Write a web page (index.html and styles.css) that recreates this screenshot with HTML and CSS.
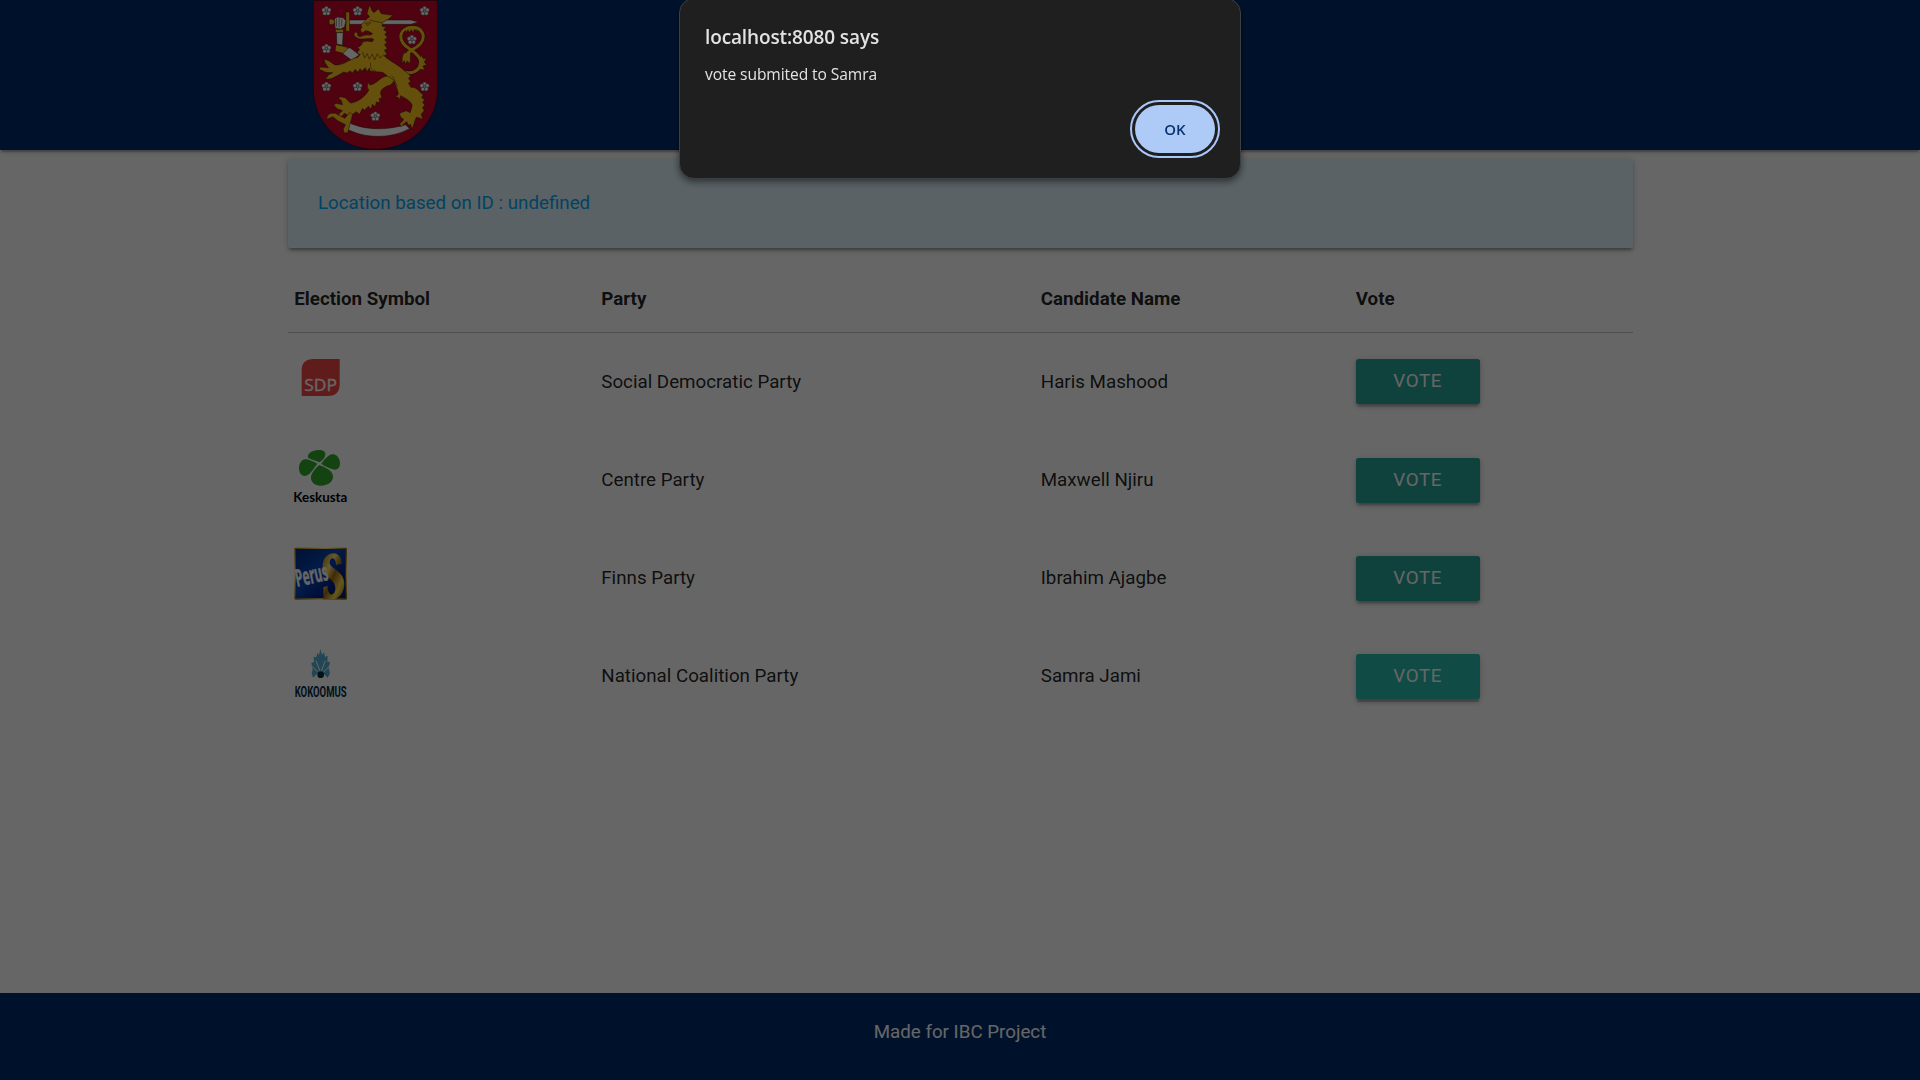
FILE: index.html
```html
<!DOCTYPE html>
<html lang="en">
<head>
<meta charset="utf-8">
<title>Vote</title>
<link rel="stylesheet" href="styles.css">
</head>
<body>
<header class="nav">
  <svg class="crest" viewBox="70 0 373 450" preserveAspectRatio="none">
    <defs>
      <g id="rose">
        <g fill="#fff" stroke="#555" stroke-width="1.5">
          <circle cx="0" cy="-8" r="6"/><circle cx="8" cy="-3" r="6"/><circle cx="5" cy="7" r="6"/><circle cx="-5" cy="7" r="6"/><circle cx="-8" cy="-3" r="6"/>
        </g>
        <circle r="4" fill="#ddd" stroke="#444" stroke-width="1.5"/>
      </g>
      <path id="tail" d="M342 216C366 224 384 212 391 196C397 176 378 160 360 148C342 137 331 125 332 108C334 90 350 82 367 82C387 82 399 95 399 111C398 131 382 141 366 149C357 154 352 160 349 168"/>
    </defs>
    <path d="M71 1H442V265C442 366 363 448 256 448S71 366 71 265Z" fill="#c8062a" stroke="#3a0510" stroke-width="2"/>
    <use href="#rose" x="110" y="33"/><use href="#rose" x="203" y="33"/><use href="#rose" x="403" y="33"/>
    <use href="#rose" x="365" y="119"/><use href="#rose" x="110" y="146"/><use href="#rose" x="110" y="260"/>
    <use href="#rose" x="203" y="260"/><use href="#rose" x="403" y="260"/><use href="#rose" x="256" y="349"/>
    <g stroke="#33200a" stroke-width="1.5" stroke-linejoin="round">
      <path d="M176 60H362L385 66L362 73H176Z" fill="#fff"/>
      <path d="M168 362C215 392 290 392 346 374L358 386C300 418 220 416 166 384Z" fill="#fff"/>
      <path d="M156 150L180 143L208 164L186 181L160 162Z" fill="#fff"/>
      <use href="#tail" fill="none" stroke-width="12"/>
      <g fill="#fdc51f">
        <path d="M344 84L348 98L353 89L358 98L363 89L369 98L373 88L381 95L378 82Z"/>
        <path d="M392 166L400 176L410 174L402 185L409 195L398 198L404 210L391 208L380 210Z"/>
        <path d="M343 158C335 166 335 180 337 190L342 182L346 192L351 183L360 191L361 158Z"/>
      </g>
      <use href="#tail" fill="none" stroke="#fdc51f" stroke-width="9"/>
      <g fill="#fdc51f">
        <path d="M118 60C122 54 128 58 134 61V70C128 74 122 77 118 70ZM168 36H179V94H168ZM156 60H168V71H156Z"/>
        <path d="M239 14L246 32L252 38L265 26L274 41L288 43L308 46L296 57L286 62L278 68L276 79L288 81L281 89L291 96L284 103L292 112L284 119L291 128L283 134L292 145L283 151L291 163L282 167C301 185 331 198 342 212L353 219L361 229L355 235L362 245L355 249L362 262C372 261 382 266 389 276L399 285L394 292L403 300L397 307L404 315L397 322L402 332L393 343L398 359L388 354L378 352L366 387L361 373L355 376L350 365L341 371L332 381L329 371L341 359L331 350L328 340L348 332L360 338L366 317C363 301 340 292 331 287L330 299L324 292L315 291L325 283C322 265 314 252 312 244L301 255C280 261 270 270 272 282L276 293L267 296L270 308L259 306L256 320L247 313L244 328L235 319L224 331L218 325L209 343L199 335L184 346L178 348L164 340L151 353L147 341L158 332L142 326L132 315L138 310L158 314L154 301L146 295L150 290L166 293L182 309C202 307 227 290 237 269L232 264L233 246L240 255C263 251 270 230 292 228L278 217L241 214L238 204L232 215L226 203L215 214L211 206L204 217L196 208L188 219L181 213L171 219L162 216L145 226L124 236L107 238L116 225L129 218L108 217L88 208L92 201L116 203L105 187L103 177L117 182L134 194C161 199 177 177 204 172L211 163L201 160L209 148L202 143L214 136L218 126L230 123L246 125L252 119C244 111 224 120 206 116C190 111 190 100 196 97C205 96 202 104 205 108C214 114 225 100 240 106L248 101L236 94L228 92L217 99L211 91L216 80L213 76L221 66L229 58L239 50L231 40Z"/>
        <path d="M137 88H161V98H137ZM138 134L158 138L176 143L160 160L136 154Z"/>
        <path d="M111 358C112 341 122 338 137 340L165 355L180 337L188 345L181 371L174 397L164 400L160 388L167 374L145 363L129 350Z"/>
      </g>
      <path d="M140 98H160L158 136L141 132ZM134 57L142 51L160 53L168 62L164 80L153 87L136 85Z" fill="#fff"/>
      <path d="M140 55V80M148 54V82M156 56V80M226 70L242 68L234 77ZM239 60C252 65 264 65 276 68M218 156L224 174L232 161L238 178L247 162L254 180L262 161L270 174L282 163M242 188C240 204 245 212 257 213M293 229C304 233 309 239 313 248M303 226C315 234 318 254 322 260" fill="none"/>
    </g>
  </svg>
</header>

<main class="container">
  <div class="card-panel">Location based on ID : undefined</div>
  <table class="ballot">
    <colgroup><col class="c-symbol"><col class="c-party"><col class="c-name"><col class="c-vote"></colgroup>
    <thead>
      <tr><th>Election Symbol</th><th>Party</th><th>Candidate Name</th><th>Vote</th></tr>
    </thead>
    <tbody>
      <tr>
        <td><svg class="symbol" viewBox="0 0 159 159">
          <g transform="translate(-1 21)">
            <path d="M24 114V38Q24 3 59 3H138V79Q138 114 103 114Z" fill="#f04444"/>
            <text x="32" y="99" class="sdp" textLength="98" lengthAdjust="spacingAndGlyphs">SDP</text>
          </g>
        </svg></td>
        <td>Social Democratic Party</td><td>Haris Mashood</td><td><button class="btn">VOTE</button></td>
      </tr>
      <tr>
        <td><svg class="symbol" viewBox="0 0 159 159">
          <g transform="translate(0 -6)">
            <g fill="#2ea829">
              <path d="M76 43L44 31C38 25 44 13 58 9C72 4 94 4 94 18C94 30 84 38 76 43Z"/>
              <path d="M82 47C90 36 103 20 115 19C130 18 139 34 138 48C137 63 126 68 114 63C102 59 91 54 82 47Z"/>
              <path d="M70 47C60 42 46 34 34 34C21 35 14 50 15 64C17 81 28 88 41 81C52 75 61 58 70 47Z"/>
              <path d="M76 51C65 60 52 75 51 87C50 103 62 113 80 113C104 113 118 100 117 85C116 66 92 58 76 51Z"/>
            </g>
            <text x="-2" y="161" class="keskusta" textLength="162" lengthAdjust="spacingAndGlyphs">Keskusta</text>
          </g>
        </svg></td>
        <td>Centre Party</td><td>Maxwell Njiru</td><td><button class="btn">VOTE</button></td>
      </tr>
      <tr>
        <td><svg class="symbol" viewBox="0 0 159 159">
          <defs>
            <linearGradient id="blue" x1="0" y1="0" x2="1" y2="1"><stop offset="0" stop-color="#002f80"/><stop offset=".45" stop-color="#0645b5"/><stop offset=".75" stop-color="#001b80"/><stop offset="1" stop-color="#002060"/></linearGradient>
            <linearGradient id="gold" x1="0" y1="0" x2="1" y2="1"><stop offset="0" stop-color="#a87a10"/><stop offset=".3" stop-color="#ffe278"/><stop offset=".5" stop-color="#9a6c10"/><stop offset=".75" stop-color="#ffd84e"/><stop offset="1" stop-color="#8a6008"/></linearGradient>
          </defs>
          <rect x="3" y="1" width="154" height="152" rx="2" fill="url(#blue)" stroke="url(#gold)" stroke-width="4"/>
          <path d="M143 47L126 51C126 28 110 24 107 42C104 62 151 67 151 107C151 139 130 156 106 154H88V118L101 113C101 147 123 147 124 121C125 93 85 87 86 51C87 10 143 -1 143 47Z" fill="url(#gold)"/>
          <text x="9" y="116" class="perus" textLength="99" lengthAdjust="spacingAndGlyphs" transform="rotate(-12 9 116)">Perus</text>
        </svg></td>
        <td>Finns Party</td><td>Ibrahim Ajagbe</td><td><button class="btn">VOTE</button></td>
      </tr>
      <tr>
        <td><svg class="symbol" viewBox="0 0 159 159">
          <g transform="translate(0 6)">
            <path d="M79 3L84 20L90 13L93 27L101 23L100 41L108 42L104 61L108 76L101 89L84 73L79 70L74 73L57 89L53 76L56 64L52 45L60 42L59 26L67 28L70 15L75 21Z" fill="#55b0d4"/>
            <path d="M51 52L76 77M109 52L84 77M66 38L78 70M94 38L82 70" stroke="#fff" stroke-width="3"/>
            <circle cx="80" cy="80" r="10" fill="#052d48"/>
            <text x="2" y="147" class="kokoomus" textLength="156" lengthAdjust="spacingAndGlyphs">KOKOOMUS</text>
          </g>
        </svg></td>
        <td>National Coalition Party</td><td>Samra Jami</td><td><button class="btn btn-hover">VOTE</button></td>
      </tr>
    </tbody>
  </table>
</main>

<footer class="footer">Made for IBC Project</footer>

<div class="overlay">
  <div class="dialog" role="alertdialog">
    <div class="dialog-title">localhost:8080 says</div>
    <div class="dialog-message">vote submited to Samra</div>
    <button class="dialog-ok">OK</button>
  </div>
</div>
</body>
</html>
```
FILE: styles.css
```css
* { box-sizing: border-box; }
html { font-size: 18.75px; }
body {
  margin: 0;
  height: 100vh;
  overflow: hidden;
  display: flex;
  flex-direction: column;
  background: #fff;
  color: rgba(0, 0, 0, .87);
  font-family: Roboto, sans-serif;
  line-height: 1.5;
}
.nav {
  flex: none;
  height: 150px;
  padding-left: 313px;
  background: #002f6c;
  box-shadow: 0 2px 3px rgba(0,0,0,.14), 0 4px 1px -2px rgba(0,0,0,.12), 0 1px 6px rgba(0,0,0,.2);
}
.crest { display: block; width: 125px; height: 150px; }
.container { flex: 1; width: 1345px; margin: 0 0 0 288px; }
.card-panel {
  margin: 9.4px 0 18.75px;
  padding: 30px;
  border-radius: 2.5px;
  background: #e1f5fe;
  color: #03a9f4;
  box-shadow: 0 2.5px 2.5px rgba(0,0,0,.14), 0 4px 1.25px -2.5px rgba(0,0,0,.12), 0 1.25px 6.25px rgba(0,0,0,.2);
}
.ballot { width: 100%; table-layout: fixed; border-collapse: collapse; }
.c-symbol { width: 307px; }
.c-party { width: 439.5px; }
.c-name { width: 315px; }
.ballot th, .ballot td { padding: 18.75px 6.25px; text-align: left; vertical-align: middle; }
.ballot td { height: 98px; padding-top: 0; padding-bottom: 0; }
.ballot tbody tr:first-child td { height: 99px; padding-bottom: 1px; }
.ballot th { font-weight: 700; }
.ballot thead { border-bottom: 1px solid rgba(0,0,0,.12); }
.symbol { display: block; width: 53px; height: 53px; margin-bottom: 8px; overflow: visible; }
.sdp { font: 47px "Open Sans", sans-serif; fill: #fff; stroke: #fff; stroke-width: 1; }
.keskusta { font: 700 37px Lato, sans-serif; fill: #000; }
.perus { font: 700 72px "Open Sans", sans-serif; fill: #fff; stroke: #fff; stroke-width: 1.5; }
.kokoomus { font: 700 43px Roboto, sans-serif; fill: #052d48; }
.btn {
  display: block;
  width: 124px;
  height: 45px;
  padding: 0;
  border: 0;
  border-radius: 2.5px;
  background: #26a69a;
  color: #fff;
  font: 18.75px/45px Roboto, sans-serif;
  letter-spacing: .625px;
  box-shadow: 0 2.5px 2.5px rgba(0,0,0,.14), 0 4px 1.25px -2.5px rgba(0,0,0,.12), 0 1.25px 6.25px rgba(0,0,0,.2);
}
.btn-hover {
  background: #2bbbad;
  box-shadow: 0 4px 4px rgba(0,0,0,.14), 0 1px 9px rgba(0,0,0,.12), 0 4px 1px -1px rgba(0,0,0,.2);
}
.footer {
  flex: none;
  height: 87px;
  padding-top: 25px;
  background: #002f6c;
  color: #fff;
  text-align: center;
}
.overlay {
  position: fixed;
  inset: 0;
  display: flex;
  justify-content: center;
  align-items: flex-start;
  background: rgba(0, 0, 0, .6);
}
.dialog {
  display: flex;
  flex-direction: column;
  width: 562px;
  height: 181px;
  margin-top: -2px;
  padding: 24px 25px 0;
  border: 1px solid #3b4046;
  border-radius: 15px;
  background: #1f1f1f;
  color: #e3e3e3;
  font-family: "Open Sans", sans-serif;
  box-shadow: 0 3px 7px rgba(0, 0, 0, .5);
}
.dialog-title { font-size: 19px; font-weight: 600; line-height: 28px; letter-spacing: -.12px; }
.dialog-message { margin-top: 12px; font-size: 15.6px; line-height: 22px; letter-spacing: -.09px; }
.dialog-ok {
  flex: none;
  align-self: flex-end;
  width: 80px;
  height: 48px;
  margin: 20px 0 0;
  padding: 0;
  border: 0;
  border-radius: 24px;
  outline: 2px solid #a8c7fa;
  outline-offset: 3px;
  background: #aecbf8;
  color: #0a3372;
  font: 600 15px "Open Sans", sans-serif;
}
```
